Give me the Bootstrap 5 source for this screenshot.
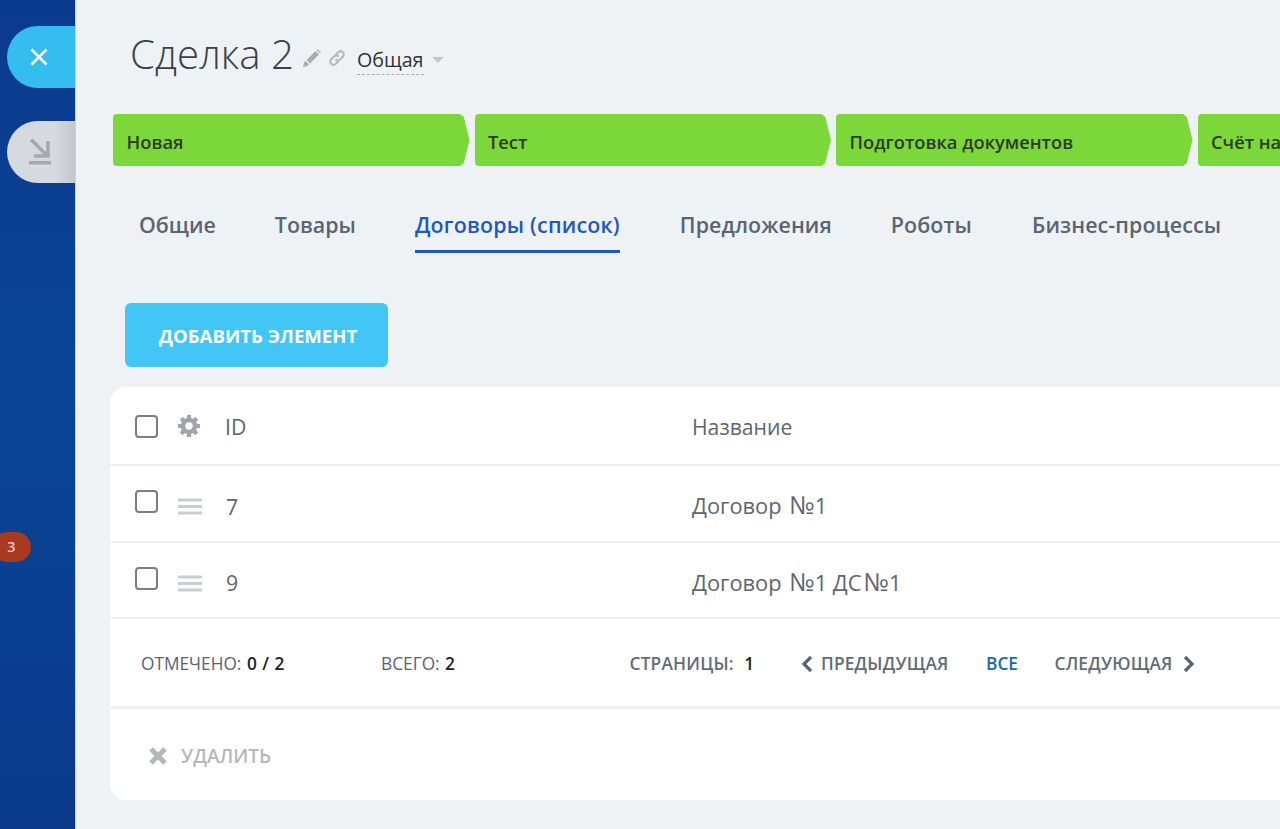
<!doctype html>
<html lang="ru"><head><meta charset="utf-8"><title>Сделка 2</title>
<link rel="stylesheet" href="https://cdn.jsdelivr.net/npm/bootstrap@5.3.0/dist/css/bootstrap.min.css">
<style>
html,body{height:100%}
body{font-family:"Open Sans","Liberation Sans",sans-serif;background:#eef2f5;color:#535c69;overflow:hidden;width:1280px;height:829px}
.shell{height:829px;width:1280px;overflow:hidden}
.rail{width:76px;flex:none;background:linear-gradient(180deg,#0a3a8e 0%,#0a4496 45%,#0a3f91 75%,#0a398b 100%);border-right:1px solid #bcd6ee;position:relative}
.tab-pill{position:absolute;left:6.500px;width:68.500px;height:62px;border-radius:31px 0 0 31px;display:flex;align-items:center;padding-left:21px}
.tab-close{top:26px;background:#35bdf0}
.tab-min{top:121px;background:linear-gradient(90deg,#d6d9de 70%,#c3c6cb)}
.count-pill{position:absolute;left:-8px;top:532px;width:39px;height:30px;border-radius:15px;background:#a83a20;color:#e6c9bd;font-size:14.500px;font-weight:600;display:flex;align-items:center;justify-content:center}
.main-area{flex:1;min-width:0;padding:26px 0 0 34px;position:relative}
.head-row{padding-left:20px;height:58px;color:#333}
.deal-title{font-size:40.200px;font-weight:300;line-height:58px;margin:-2px 0 0;color:#3b4148}
.ico-pen{margin:6px 0 0 9px}
.ico-link{margin:6px 0 0 7px}
.cat-link{font-size:19.700px;color:#2f3338;border-bottom:1px dashed #a9aeb3;line-height:28px;margin-left:11px;margin-top:10px}
.caret-down{width:0;height:0;border:6px solid transparent;border-top:6px solid #c3c6cb;border-bottom:0;margin-left:8px;margin-top:9px}
.stages{margin:30px 0 0 3px;gap:5px;width:1300px}
.stage-chip{width:356.500px;height:52px;flex:none;background:#7cd83a;color:#2f3a24;font-size:18.300px;font-weight:600;display:flex;align-items:center;padding:3px 0 0 13.500px;border-radius:4px 0 0 4px;clip-path:polygon(0 0,97.3% 0,98.4% 6%,100% 50%,98.4% 94%,97.3% 100%,0 100%)}
.tabs-row{margin:36px 0 0 29px;gap:59px;height:51px}
.tab-item{font-size:21.400px;font-weight:600;color:#5a6472;line-height:46px;height:51px;white-space:nowrap}
.tab-on{color:#1f58c0;border-bottom:3px solid #1f58c0;letter-spacing:.2px;margin-right:1px}
.tab-wide{letter-spacing:.1px}
.tab-shift{margin-right:1px}
.add-btn{margin:50px 0 0 14.500px;width:263px;height:64px;padding:2px 0 0 4px;background:#41c6f5;color:#fff;font-size:18.600px;font-weight:700;border-radius:6px;display:flex;align-items:center;justify-content:center;border:0}
.grid-panel{margin-top:20px;background:#fff;border-radius:16px 0 0 16px;height:413px;width:1170px}
.grid-line{height:77px;border-bottom:2px solid #eef1f4;display:flex;align-items:center;font-size:21.200px;color:#5d6570;flex:none;position:relative}
.line-top{height:79px}
.line-last{height:76px}
.cell-text{position:relative;top:3px}
.line-top .cell-text{top:1px}
.name-cell{font-size:21.800px}
.check-box{width:23px;height:23px;border:2px solid #797d82;border-radius:4px;margin:0 .5px 0 24.500px;flex:none;position:relative;top:-2px}
.line-top .check-box{top:1px}
.row-ico{margin-left:20px;width:24px;flex:none;display:flex;justify-content:flex-start;position:relative;top:3px}
.line-top .row-ico{top:0}
.cell-id{width:467px;margin-left:23px;flex:none}
.digit-cell{padding-left:1px}
.num-sign{font-size:25px;line-height:1;margin-left:2px}
.foot-line{height:89.500px;border-bottom:3px solid #eef1f4;display:flex;align-items:center;font-size:17.300px;font-weight:500;color:#5a636e;white-space:nowrap;padding-top:4px}
.foot-line b{font-weight:600;color:#222;word-spacing:1px;margin-left:1px}
.pager-part{font-weight:600;color:#626b76;letter-spacing:.2px}
.act-line{display:flex;align-items:center;padding:3px 0 0 38px;flex:1;font-size:19px;font-weight:600;color:#b4b8bd;gap:13px}
.blue-link{color:#2067b0}
.f1{margin-left:31px;width:240px}.f2{width:248.500px}.f3{width:171.500px}.f4{width:165px}.f5{width:68.500px}
.next-arrow{margin-left:10.500px}
</style></head><body>
<div class="shell d-flex">
  <div class="rail">
    <div class="tab-pill tab-close"><svg width="22" height="22" viewBox="0 0 22 22"><path d="M3.500 3.500 18.500 18.500M18.500 3.500 3.500 18.500" stroke="#fff" stroke-width="2.600" fill="none"/></svg></div>
    <div class="tab-pill tab-min"><svg width="24" height="28" viewBox="0 0 24 28"><path d="M3 1.500 18 16.500M20 3V18H6" stroke="#a4a9b0" stroke-width="3.600" fill="none"/><rect x="1" y="23" width="22" height="3.500" fill="#a4a9b0"/></svg></div>
    <div class="count-pill">3</div>
  </div>
  <div class="main-area">
    <div class="head-row d-flex align-items-center">
      <h1 class="deal-title">Сделка 2</h1>
      <svg class="ico-pen" width="18" height="18" viewBox="0 0 18 18"><path d="M0 18 1 13.500 2.500 12 6 15.500 4.500 17ZM3.500 11 12.500 2 16 5.500 7 14.500ZM13.500 1l1-1 3.500 3.500-1 1Z" fill="#a9adb2"/></svg>
      <svg class="ico-link" width="18" height="18" viewBox="0 0 18 18" fill="none" stroke="#b4b8bc" stroke-width="2"><path d="M7.500 6 10.500 3a3.200 3.200 0 0 1 4.500 4.500l-3 3a3.200 3.200 0 0 1-4.500 0"/><path d="M10.500 12 7.500 15a3.200 3.200 0 0 1-4.500-4.500l3-3a3.200 3.200 0 0 1 4.500 0"/></svg>
      <span class="cat-link">Общая</span><span class="caret-down"></span>
    </div>
    <div class="stages d-flex">
      <div class="stage-chip">Новая</div><div class="stage-chip">Тест</div><div class="stage-chip">Подготовка документов</div><div class="stage-chip">Счёт на предоплату</div>
    </div>
    <div class="tabs-row d-flex">
      <span class="tab-item">Общие</span><span class="tab-item">Товары</span><span class="tab-item tab-on">Договоры (список)</span><span class="tab-item tab-wide">Предложения</span><span class="tab-item tab-wide tab-shift">Роботы</span><span class="tab-item tab-wide">Бизнес-процессы</span>
    </div>
    <button class="add-btn">ДОБАВИТЬ ЭЛЕМЕНТ</button>
    <div class="grid-panel d-flex flex-column">
      <div class="grid-line line-top"><span class="check-box"></span><span class="row-ico"><svg width="22" height="22" viewBox="0 0 22 22"><g stroke="#9fa5ac" stroke-width="4.200"><path d="M11 0V22M0 11H22M3.200 3.200 18.800 18.800M18.800 3.200 3.200 18.800"/></g><circle cx="11" cy="11" r="8.300" fill="#9fa5ac"/><circle cx="11" cy="11" r="3.700" fill="#fff"/></svg></span><span class="cell-id cell-text">ID</span><span class="cell-text">Название</span></div>
      <div class="grid-line"><span class="check-box"></span><span class="row-ico"><svg width="24" height="17" viewBox="0 0 24 17"><path d="M0 2h24M0 8.500h24M0 15h24" stroke="#c9cdd1" stroke-width="3"/></svg></span><span class="cell-id cell-text digit-cell">7</span><span class="cell-text name-cell">Договор <span class="num-sign">№</span>1</span></div>
      <div class="grid-line line-last"><span class="check-box"></span><span class="row-ico"><svg width="24" height="17" viewBox="0 0 24 17"><path d="M0 2h24M0 8.500h24M0 15h24" stroke="#c9cdd1" stroke-width="3"/></svg></span><span class="cell-id cell-text digit-cell">9</span><span class="cell-text name-cell">Договор <span class="num-sign">№</span>1 ДС<span class="num-sign">№</span>1</span></div>
      <div class="foot-line">
        <span class="f1">ОТМЕЧЕНО: <b>0 / 2</b></span>
        <span class="f2">ВСЕГО: <b>2</b></span>
        <span class="f3 pager-part">СТРАНИЦЫ:&nbsp;&nbsp;<b>1</b></span>
        <svg width="12" height="18" viewBox="0 0 12 18" class="me-2"><path d="M10 2 3 9l7 7" stroke="#5a6472" stroke-width="3.200" fill="none"/></svg>
        <span class="f4 pager-part">ПРЕДЫДУЩАЯ</span>
        <span class="blue-link f5 fw-semibold">ВСЕ</span>
        <span class="pager-part">СЛЕДУЮЩАЯ</span>
        <svg width="12" height="18" viewBox="0 0 12 18" class="next-arrow"><path d="M2 2l7 7-7 7" stroke="#5a6472" stroke-width="3.200" fill="none"/></svg>
      </div>
      <div class="act-line"><svg width="20" height="20" viewBox="0 0 20 20"><path d="M3 3 17 17M17 3 3 17" stroke="#b4b8bd" stroke-width="5" fill="none"/></svg><span>УДАЛИТЬ</span></div>
    </div>
  </div>
</div>
</body></html>
